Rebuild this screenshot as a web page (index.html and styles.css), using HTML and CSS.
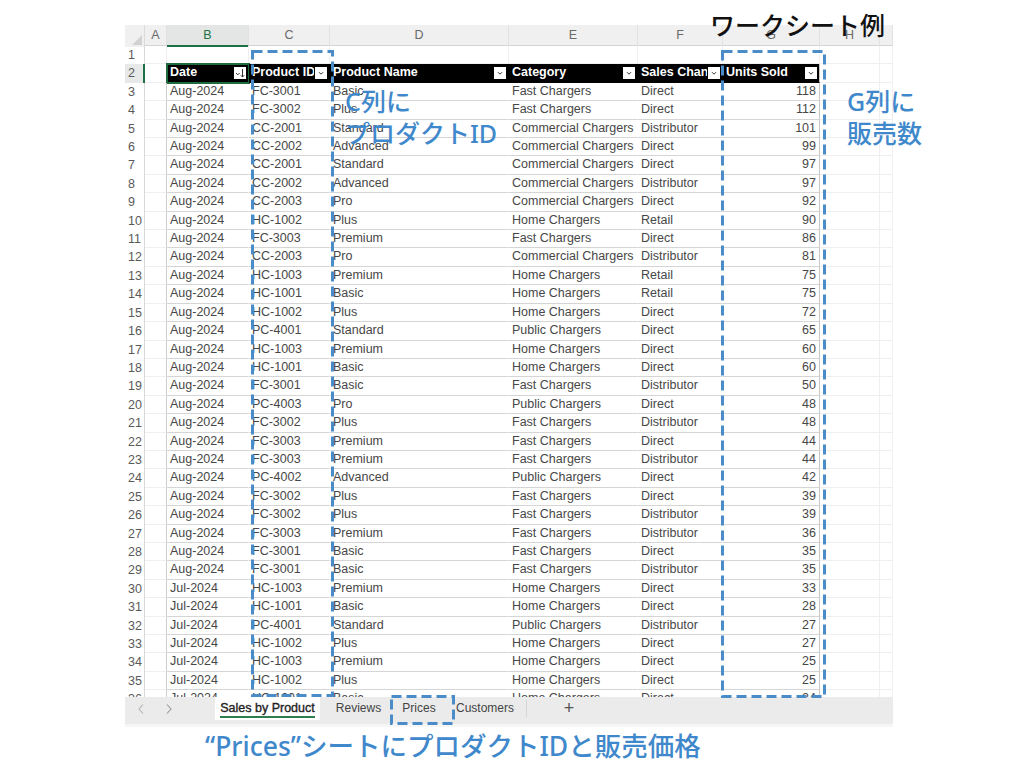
FILE: index.html
```html
<!DOCTYPE html>
<html lang="ja">
<head>
<meta charset="utf-8">
<title>ワークシート例</title>
<link rel="stylesheet" href="styles.css">
</head>
<body>
<div class="page">
  <div class="sheet">
    <div class="grid">
      <div class="row colhead">
        <div class="corner"><span class="tri"></span></div>
        <div class="ch">A</div><div class="ch sel">B</div><div class="ch">C</div><div class="ch">D</div><div class="ch">E</div><div class="ch">F</div><div class="ch">G</div><div class="ch">H</div><div class="ch"></div>
      </div>
      <div class="row"><div class="rh">1</div><div class="c"></div><div class="c"></div><div class="c"></div><div class="c"></div><div class="c"></div><div class="c"></div><div class="c"></div><div class="c"></div><div class="c"></div></div>
      <div class="row tr">
        <div class="rh act">2</div><div class="c a"></div>
        <div class="c th active"><span class="lbl">Date</span><span class="fb"><svg width="12" height="12" viewBox="0 0 12 12"><path d="M2 6 L3.8 7.8 L5.6 6" fill="none" stroke="#333" stroke-width="1"/><path d="M8.5 2 V10 M6.8 8.3 L8.5 10 L10.2 8.3" fill="none" stroke="#333" stroke-width="1"/></svg></span></div>
        <div class="c th"><span class="lbl">Product ID</span><span class="fb"><svg width="12" height="12" viewBox="0 0 12 12"><path d="M4 5.2 L6 7.2 L8 5.2" fill="none" stroke="#333" stroke-width="1"/></svg></span></div>
        <div class="c th"><span class="lbl">Product Name</span><span class="fb"><svg width="12" height="12" viewBox="0 0 12 12"><path d="M4 5.2 L6 7.2 L8 5.2" fill="none" stroke="#333" stroke-width="1"/></svg></span></div>
        <div class="c th"><span class="lbl">Category</span><span class="fb"><svg width="12" height="12" viewBox="0 0 12 12"><path d="M4 5.2 L6 7.2 L8 5.2" fill="none" stroke="#333" stroke-width="1"/></svg></span></div>
        <div class="c th"><span class="lbl">Sales Channel</span><span class="fb"><svg width="12" height="12" viewBox="0 0 12 12"><path d="M4 5.2 L6 7.2 L8 5.2" fill="none" stroke="#333" stroke-width="1"/></svg></span></div>
        <div class="c th g"><span class="lbl">Units Sold</span><span class="fb"><svg width="12" height="12" viewBox="0 0 12 12"><path d="M4 5.2 L6 7.2 L8 5.2" fill="none" stroke="#333" stroke-width="1"/></svg></span></div>
        <div class="c"></div><div class="c"></div>
      </div>
      <div class="row tr"><div class="rh">3</div><div class="c a"></div><div class="c t">Aug-2024</div><div class="c t">FC-3001</div><div class="c t">Basic</div><div class="c t">Fast Chargers</div><div class="c t">Direct</div><div class="c t g n">118</div><div class="c"></div><div class="c"></div></div>
      <div class="row tr"><div class="rh">4</div><div class="c a"></div><div class="c t">Aug-2024</div><div class="c t">FC-3002</div><div class="c t">Plus</div><div class="c t">Fast Chargers</div><div class="c t">Direct</div><div class="c t g n">112</div><div class="c"></div><div class="c"></div></div>
      <div class="row tr"><div class="rh">5</div><div class="c a"></div><div class="c t">Aug-2024</div><div class="c t">CC-2001</div><div class="c t">Standard</div><div class="c t">Commercial Chargers</div><div class="c t">Distributor</div><div class="c t g n">101</div><div class="c"></div><div class="c"></div></div>
      <div class="row tr"><div class="rh">6</div><div class="c a"></div><div class="c t">Aug-2024</div><div class="c t">CC-2002</div><div class="c t">Advanced</div><div class="c t">Commercial Chargers</div><div class="c t">Direct</div><div class="c t g n">99</div><div class="c"></div><div class="c"></div></div>
      <div class="row tr"><div class="rh">7</div><div class="c a"></div><div class="c t">Aug-2024</div><div class="c t">CC-2001</div><div class="c t">Standard</div><div class="c t">Commercial Chargers</div><div class="c t">Direct</div><div class="c t g n">97</div><div class="c"></div><div class="c"></div></div>
      <div class="row tr"><div class="rh">8</div><div class="c a"></div><div class="c t">Aug-2024</div><div class="c t">CC-2002</div><div class="c t">Advanced</div><div class="c t">Commercial Chargers</div><div class="c t">Distributor</div><div class="c t g n">97</div><div class="c"></div><div class="c"></div></div>
      <div class="row tr"><div class="rh">9</div><div class="c a"></div><div class="c t">Aug-2024</div><div class="c t">CC-2003</div><div class="c t">Pro</div><div class="c t">Commercial Chargers</div><div class="c t">Direct</div><div class="c t g n">92</div><div class="c"></div><div class="c"></div></div>
      <div class="row tr"><div class="rh">10</div><div class="c a"></div><div class="c t">Aug-2024</div><div class="c t">HC-1002</div><div class="c t">Plus</div><div class="c t">Home Chargers</div><div class="c t">Retail</div><div class="c t g n">90</div><div class="c"></div><div class="c"></div></div>
      <div class="row tr"><div class="rh">11</div><div class="c a"></div><div class="c t">Aug-2024</div><div class="c t">FC-3003</div><div class="c t">Premium</div><div class="c t">Fast Chargers</div><div class="c t">Direct</div><div class="c t g n">86</div><div class="c"></div><div class="c"></div></div>
      <div class="row tr"><div class="rh">12</div><div class="c a"></div><div class="c t">Aug-2024</div><div class="c t">CC-2003</div><div class="c t">Pro</div><div class="c t">Commercial Chargers</div><div class="c t">Distributor</div><div class="c t g n">81</div><div class="c"></div><div class="c"></div></div>
      <div class="row tr"><div class="rh">13</div><div class="c a"></div><div class="c t">Aug-2024</div><div class="c t">HC-1003</div><div class="c t">Premium</div><div class="c t">Home Chargers</div><div class="c t">Retail</div><div class="c t g n">75</div><div class="c"></div><div class="c"></div></div>
      <div class="row tr"><div class="rh">14</div><div class="c a"></div><div class="c t">Aug-2024</div><div class="c t">HC-1001</div><div class="c t">Basic</div><div class="c t">Home Chargers</div><div class="c t">Retail</div><div class="c t g n">75</div><div class="c"></div><div class="c"></div></div>
      <div class="row tr"><div class="rh">15</div><div class="c a"></div><div class="c t">Aug-2024</div><div class="c t">HC-1002</div><div class="c t">Plus</div><div class="c t">Home Chargers</div><div class="c t">Direct</div><div class="c t g n">72</div><div class="c"></div><div class="c"></div></div>
      <div class="row tr"><div class="rh">16</div><div class="c a"></div><div class="c t">Aug-2024</div><div class="c t">PC-4001</div><div class="c t">Standard</div><div class="c t">Public Chargers</div><div class="c t">Direct</div><div class="c t g n">65</div><div class="c"></div><div class="c"></div></div>
      <div class="row tr"><div class="rh">17</div><div class="c a"></div><div class="c t">Aug-2024</div><div class="c t">HC-1003</div><div class="c t">Premium</div><div class="c t">Home Chargers</div><div class="c t">Direct</div><div class="c t g n">60</div><div class="c"></div><div class="c"></div></div>
      <div class="row tr"><div class="rh">18</div><div class="c a"></div><div class="c t">Aug-2024</div><div class="c t">HC-1001</div><div class="c t">Basic</div><div class="c t">Home Chargers</div><div class="c t">Direct</div><div class="c t g n">60</div><div class="c"></div><div class="c"></div></div>
      <div class="row tr"><div class="rh">19</div><div class="c a"></div><div class="c t">Aug-2024</div><div class="c t">FC-3001</div><div class="c t">Basic</div><div class="c t">Fast Chargers</div><div class="c t">Distributor</div><div class="c t g n">50</div><div class="c"></div><div class="c"></div></div>
      <div class="row tr"><div class="rh">20</div><div class="c a"></div><div class="c t">Aug-2024</div><div class="c t">PC-4003</div><div class="c t">Pro</div><div class="c t">Public Chargers</div><div class="c t">Direct</div><div class="c t g n">48</div><div class="c"></div><div class="c"></div></div>
      <div class="row tr"><div class="rh">21</div><div class="c a"></div><div class="c t">Aug-2024</div><div class="c t">FC-3002</div><div class="c t">Plus</div><div class="c t">Fast Chargers</div><div class="c t">Distributor</div><div class="c t g n">48</div><div class="c"></div><div class="c"></div></div>
      <div class="row tr"><div class="rh">22</div><div class="c a"></div><div class="c t">Aug-2024</div><div class="c t">FC-3003</div><div class="c t">Premium</div><div class="c t">Fast Chargers</div><div class="c t">Direct</div><div class="c t g n">44</div><div class="c"></div><div class="c"></div></div>
      <div class="row tr"><div class="rh">23</div><div class="c a"></div><div class="c t">Aug-2024</div><div class="c t">FC-3003</div><div class="c t">Premium</div><div class="c t">Fast Chargers</div><div class="c t">Distributor</div><div class="c t g n">44</div><div class="c"></div><div class="c"></div></div>
      <div class="row tr"><div class="rh">24</div><div class="c a"></div><div class="c t">Aug-2024</div><div class="c t">PC-4002</div><div class="c t">Advanced</div><div class="c t">Public Chargers</div><div class="c t">Direct</div><div class="c t g n">42</div><div class="c"></div><div class="c"></div></div>
      <div class="row tr"><div class="rh">25</div><div class="c a"></div><div class="c t">Aug-2024</div><div class="c t">FC-3002</div><div class="c t">Plus</div><div class="c t">Fast Chargers</div><div class="c t">Direct</div><div class="c t g n">39</div><div class="c"></div><div class="c"></div></div>
      <div class="row tr"><div class="rh">26</div><div class="c a"></div><div class="c t">Aug-2024</div><div class="c t">FC-3002</div><div class="c t">Plus</div><div class="c t">Fast Chargers</div><div class="c t">Distributor</div><div class="c t g n">39</div><div class="c"></div><div class="c"></div></div>
      <div class="row tr"><div class="rh">27</div><div class="c a"></div><div class="c t">Aug-2024</div><div class="c t">FC-3003</div><div class="c t">Premium</div><div class="c t">Fast Chargers</div><div class="c t">Distributor</div><div class="c t g n">36</div><div class="c"></div><div class="c"></div></div>
      <div class="row tr"><div class="rh">28</div><div class="c a"></div><div class="c t">Aug-2024</div><div class="c t">FC-3001</div><div class="c t">Basic</div><div class="c t">Fast Chargers</div><div class="c t">Direct</div><div class="c t g n">35</div><div class="c"></div><div class="c"></div></div>
      <div class="row tr"><div class="rh">29</div><div class="c a"></div><div class="c t">Aug-2024</div><div class="c t">FC-3001</div><div class="c t">Basic</div><div class="c t">Fast Chargers</div><div class="c t">Distributor</div><div class="c t g n">35</div><div class="c"></div><div class="c"></div></div>
      <div class="row tr"><div class="rh">30</div><div class="c a"></div><div class="c t">Jul-2024</div><div class="c t">HC-1003</div><div class="c t">Premium</div><div class="c t">Home Chargers</div><div class="c t">Direct</div><div class="c t g n">33</div><div class="c"></div><div class="c"></div></div>
      <div class="row tr"><div class="rh">31</div><div class="c a"></div><div class="c t">Jul-2024</div><div class="c t">HC-1001</div><div class="c t">Basic</div><div class="c t">Home Chargers</div><div class="c t">Direct</div><div class="c t g n">28</div><div class="c"></div><div class="c"></div></div>
      <div class="row tr"><div class="rh">32</div><div class="c a"></div><div class="c t">Jul-2024</div><div class="c t">PC-4001</div><div class="c t">Standard</div><div class="c t">Public Chargers</div><div class="c t">Distributor</div><div class="c t g n">27</div><div class="c"></div><div class="c"></div></div>
      <div class="row tr"><div class="rh">33</div><div class="c a"></div><div class="c t">Jul-2024</div><div class="c t">HC-1002</div><div class="c t">Plus</div><div class="c t">Home Chargers</div><div class="c t">Direct</div><div class="c t g n">27</div><div class="c"></div><div class="c"></div></div>
      <div class="row tr"><div class="rh">34</div><div class="c a"></div><div class="c t">Jul-2024</div><div class="c t">HC-1003</div><div class="c t">Premium</div><div class="c t">Home Chargers</div><div class="c t">Direct</div><div class="c t g n">25</div><div class="c"></div><div class="c"></div></div>
      <div class="row tr"><div class="rh">35</div><div class="c a"></div><div class="c t">Jul-2024</div><div class="c t">HC-1002</div><div class="c t">Plus</div><div class="c t">Home Chargers</div><div class="c t">Direct</div><div class="c t g n">25</div><div class="c"></div><div class="c"></div></div>
      <div class="row tr"><div class="rh">36</div><div class="c a"></div><div class="c t">Jul-2024</div><div class="c t">HC-1001</div><div class="c t">Basic</div><div class="c t">Home Chargers</div><div class="c t">Direct</div><div class="c t g n">24</div><div class="c"></div><div class="c"></div></div>
    </div>
    <div class="tabs">
      <span class="nav first"><svg width="8" height="12" viewBox="0 0 8 12"><path d="M6 1.5 L2 6 L6 10.5" fill="none" stroke="#b4b4b4" stroke-width="1.1"/></svg></span>
      <span class="nav"><svg width="8" height="12" viewBox="0 0 8 12"><path d="M2 1.5 L6 6 L2 10.5" fill="none" stroke="#9a9a9a" stroke-width="1.1"/></svg></span>
      <span class="tab on"><span class="tabtxt">Sales by Product</span></span>
      <span class="tab rev">Reviews</span>
      <span class="tab pri">Prices</span>
      <span class="tab cus">Customers</span>
      <span class="tab add">+</span>
    </div>
  </div>

  <div class="title">ワークシート例</div>
  <div class="note note-c">C列に<br>プロダクトID</div>
  <div class="note note-g">G列に<br>販売数</div>
  <div class="caption">“Prices”シートにプロダクトIDと販売価格</div>

  <svg class="box box-c" width="83" height="647" viewBox="0 0 83 647"><rect x="1.5" y="1.5" width="80" height="644" fill="none" stroke="#4a8cc8" stroke-width="3" stroke-dasharray="10 5"/></svg>
  <svg class="box box-g" width="105" height="648" viewBox="0 0 105 648"><rect x="1.5" y="1.5" width="102" height="645" fill="none" stroke="#4a8cc8" stroke-width="3" stroke-dasharray="10 5"/></svg>
  <svg class="box box-p" width="65" height="30" viewBox="0 0 65 30"><rect x="1.5" y="1.5" width="62" height="27" fill="none" stroke="#4a8cc8" stroke-width="3" stroke-dasharray="10 5"/></svg>
</div>
</body>
</html>
```
FILE: styles.css
```css
* { box-sizing: border-box; margin: 0; padding: 0; }
html, body { background: #fff; }
body { font-family: "Liberation Sans", Arial, sans-serif; }

.page {
  position: relative;
  width: 1024px;
  height: 768px;
  padding: 25px 0 0 125px;
}
.sheet { width: 768px; }
.grid { height: 672px; overflow: hidden; background: #fff; }

.row {
  display: grid;
  grid-template-columns: 20px 22px 82px 81px 179px 129px 85px 97px 60px 13px;
  height: 18.42px;
}
.colhead { height: 21px; background: #f0f0f0; border-bottom: 1px solid #d4d4d4; }

.corner { position: relative; background: #f0f0f0; border-right: 1px solid #dadada; }
.tri {
  position: absolute; right: 2px; bottom: 2px;
  width: 0; height: 0;
  border-left: 10px solid transparent;
  border-bottom: 10px solid #d2d2d2;
}
.ch {
  font-size: 12.5px; color: #6a6a6a; text-align: center; line-height: 20px;
  border-right: 1px solid #e2e2e2;
}
.ch.sel { background: #e3e6e4; color: #1e7145; border-bottom: 2px solid #1e7145; }

.rh {
  font-size: 12.5px; color: #5a5a5a; line-height: 18px; padding-left: 3px;
  background: #fff; border-right: 1px solid #d8d8d8;
}
.rh.act { background: #e6e9e7; border-right: 2px solid #1e7145; }

.c {
  font-size: 12.5px; color: #474747; line-height: 17.4px; padding: 0 3px;
  white-space: nowrap; overflow: hidden;
  border-right: 1px solid #efefef; border-bottom: 1px solid #efefef;
}
.c.a { border-right-color: #cdcdcd; }
.c.t { border-right-color: transparent; border-bottom-color: #d5d5d5; }
.c.g { border-right-color: #c8c8c8; }
.c.n { text-align: right; }

.c.th {
  background: #000; color: #fff; font-weight: 700; font-size: 12.5px;
  display: flex; align-items: center; padding: 0 2px 0 3px;
  border-right-color: #000; border-bottom-color: #000;
}
.c.th.g { border-right-color: #c8c8c8; }
.c.th.active { outline: 2px solid #1e6b40; outline-offset: -1px; }
.lbl { flex: 1; min-width: 0; overflow: hidden; white-space: nowrap; }
.fb {
  flex: none; width: 12px; height: 12px; background: #fff;
  display: flex; align-items: center; justify-content: center;
  margin-left: 1px;
}
.fb svg { display: block; }

.tabs {
  height: 30px;
  background: #ebebeb;
  border-bottom: 3px solid #f6f6f6;
  display: flex; align-items: flex-start;
  font-size: 12px; color: #444;
}
.nav { width: 8px; height: 23px; display: flex; align-items: center; margin-left: 20px; }
.nav.first { margin-left: 12px; }
.tab { height: 23px; line-height: 23px; text-align: center; white-space: nowrap; }
.tab.on {
  margin-left: 42px; width: 105px; background: #fff; color: #222;
  font-size: 12.5px; -webkit-text-stroke: 0.35px #222;
  display: flex; justify-content: center;
}
.tabtxt { display: block; height: 21px; line-height: 21px; border-bottom: 2px solid #2e7d4f; padding-top: 1px; }
.tab.rev { margin-left: 2px; width: 73px; }
.tab.pri { width: 48px; }
.tab.cus { width: 84px; position: relative; }
.tab.cus::after {
  content: ""; position: absolute; right: 0; top: 3px; height: 17px;
  border-right: 1px solid #d6d6d6;
}
.tab.add { width: 84px; font-size: 18px; color: #555; font-weight: 300; }

.title {
  position: absolute; left: 710px; top: 11px;
  font-family: "Noto Sans CJK JP", sans-serif;
  font-size: 25px; line-height: 27px; font-weight: 500; color: #111;
  white-space: nowrap;
}
.note, .caption {
  position: absolute;
  font-family: "Noto Sans", "Noto Sans CJK JP", sans-serif;
  font-weight: 500; color: #3f88cb; white-space: nowrap;
}
.note { font-size: 25px; line-height: 32px; top: 85px; }
.note-c { left: 345px; }
.note-g { left: 847px; }
.caption { left: 205px; top: 731px; font-size: 26.5px; line-height: 30px; }

.box { position: absolute; display: block; }
.box-c { left: 251px; top: 50px; }
.box-g { left: 721px; top: 50px; }
.box-p { left: 390px; top: 695px; }
```
